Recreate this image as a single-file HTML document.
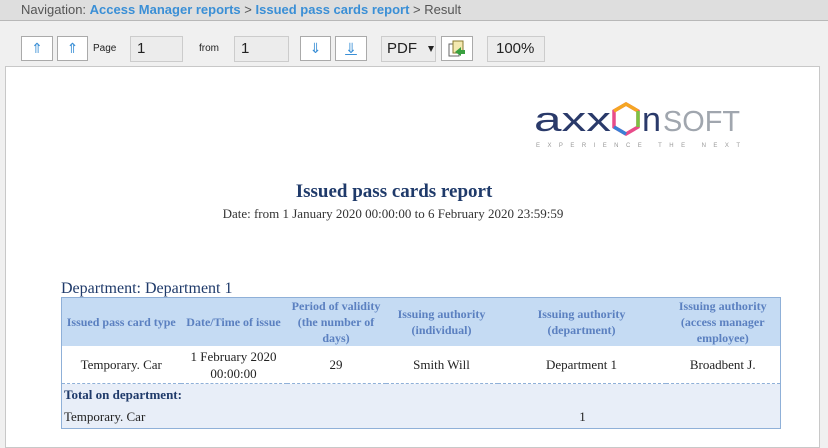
<!DOCTYPE html>
<html><head><meta charset="utf-8"><style>
body{margin:0;width:828px;height:434px;overflow:hidden;background:#f0f0f0;font-family:"Liberation Sans",sans-serif;position:relative}
.nav{position:absolute;left:0;top:0;width:828px;height:20px;background:#dedede;border-bottom:1px solid #b8b8b8;font-size:13px;color:#555;line-height:19px}
.nav span{position:absolute;left:21px;top:0;white-space:nowrap}
.nav b{color:#3a8fd6}
.btn{position:absolute;top:36px;height:25px;background:#fff;border:1px solid #aaa;box-sizing:border-box;text-align:center;color:#3a8fd6;font-size:14px;line-height:22px}
.inp{position:absolute;top:36px;height:26px;background:#ececec;border:1px solid #ccc;box-sizing:border-box;font-size:15px;line-height:24px;padding-left:6px;color:#222}
.tri{display:inline-block;width:0;height:0;border-left:3px solid transparent;border-right:3px solid transparent;border-top:6px solid #222;vertical-align:middle;margin-left:6px}
.lbl{position:absolute;top:43px;font-size:10px;color:#222}
.page{position:absolute;left:5px;top:66px;width:813px;height:380px;background:#fff;border:1px solid #c8c8c8}
.title{position:absolute;left:0;width:788px;top:181px;text-align:center;font-family:"Liberation Serif",serif;font-weight:bold;font-size:19px;color:#1f3a6a}
.date{position:absolute;left:0;width:786px;top:206px;text-align:center;font-family:"Liberation Serif",serif;font-size:13px;color:#333}
.dept{position:absolute;left:61px;top:280px;font-family:"Liberation Serif",serif;font-size:16px;color:#1f3a6a}
table{position:absolute;left:61px;top:297px;width:719px;table-layout:fixed;border-collapse:collapse;font-family:"Liberation Serif",serif;font-size:13px;border:1px solid #8fb0d8}
th{background:#c5dbf3;color:#5b80c0;font-size:12px;font-weight:bold;height:48px;padding:0 1px;line-height:16px}
td{text-align:center;color:#222;height:37px;line-height:17px;padding:0}
tr.tot td{background:#e8eef8;text-align:left;height:22px;line-height:16px;padding-left:2px}
</style></head><body>
<div class="nav"><span>Navigation: <b>Access Manager reports</b> &gt; <b>Issued pass cards report</b> &gt; Result</span></div>
<div class="btn" style="left:21px;width:32px">⇑</div>
<div class="btn" style="left:57px;width:31px">⇑</div>
<div class="lbl" style="left:93px">Page</div>
<div class="inp" style="left:130px;width:53px">1</div>
<div class="lbl" style="left:199px">from</div>
<div class="inp" style="left:234px;width:55px">1</div>
<div class="btn" style="left:300px;width:31px">⇓</div>
<div class="btn" style="left:335px;width:32px"><u>⇓</u></div>
<div class="inp" style="left:381px;width:55px;padding-left:5px">PDF<span class="tri" style="margin-left:11px"></span></div>
<div class="btn" style="left:441px;width:32px"><svg width="20" height="18" viewBox="0 0 20 18" style="margin-top:3px"><rect x="2" y="4" width="10" height="12" fill="#fff" stroke="#666"/><rect x="6" y="1" width="10" height="12" fill="#f4e9b0" stroke="#8a7a30"/><path d="M8 12 L14 7 L14 10 L18 10 L18 14 L14 14 L14 16Z" fill="#3aa040"/></svg></div>
<div class="inp" style="left:487px;width:58px;padding-left:8px">100%<span class="tri"></span></div>
<div class="page"></div>
<svg style="position:absolute;left:530px;top:98px" width="220" height="55">
<text x="4" y="33" font-family="Liberation Sans" font-size="34" fill="#2a3a6a" textLength="77" lengthAdjust="spacingAndGlyphs">axx</text>
<polygon points="96,6 108,13 108,29 96,36 84,29 84,13" fill="none" stroke="#e84c8a" stroke-width="3.5"/>
<polyline points="84,13 96,6 108,13" fill="none" stroke="#f5a623" stroke-width="3.5"/>
<polyline points="108,13 108,29" fill="none" stroke="#7cc242" stroke-width="3.5"/>
<polyline points="84,29 96,36" fill="none" stroke="#3a7fd6" stroke-width="3.5"/>
<text x="112" y="33" font-family="Liberation Sans" font-size="34" fill="#2a3a6a" textLength="19" lengthAdjust="spacingAndGlyphs">n</text>
<text x="133" y="33" font-family="Liberation Sans" font-size="29" fill="#a0a6ae" textLength="77" lengthAdjust="spacingAndGlyphs">SOFT</text>
<text x="6" y="49" font-family="Liberation Sans" font-size="6" fill="#999" textLength="204" lengthAdjust="spacing">EXPERIENCE   THE   NEXT</text>
</svg>
<div class="title">Issued pass cards report</div>
<div class="date">Date: from 1 January 2020 00:00:00 to 6 February 2020 23:59:59</div>
<div class="dept">Department: Department 1</div>
<table>
<colgroup><col style="width:119px"><col style="width:106px"><col style="width:99px"><col style="width:112px"><col style="width:168px"><col style="width:115px"></colgroup>
<tr><th>Issued pass card type</th><th>Date/Time of issue</th><th style="padding:0 3px">Period of validity (the number of days)</th><th>Issuing authority (individual)</th><th style="padding:0 30px">Issuing authority (department)</th><th style="padding:0 4px">Issuing authority (access manager employee)</th></tr>
<tr style="border-bottom:1px dashed #8fb0d8"><td>Temporary. Car</td><td>1 February 2020<br>00:00:00</td><td>29</td><td>Smith Will</td><td>Department 1</td><td>Broadbent J.</td></tr>
<tr class="tot"><td colspan="6" style="font-weight:bold;color:#1f3a6a">Total on department:</td></tr>
<tr class="tot"><td>Temporary. Car</td><td></td><td></td><td></td><td style="text-align:center">1</td><td></td></tr>
</table>
</body></html>
